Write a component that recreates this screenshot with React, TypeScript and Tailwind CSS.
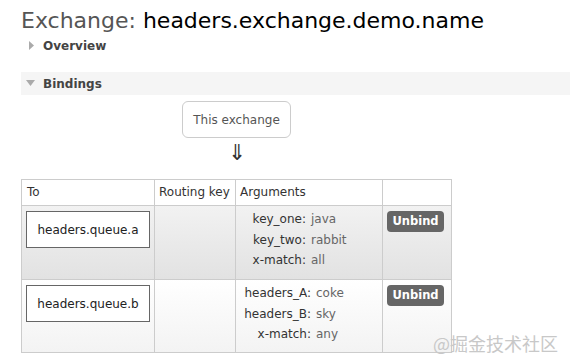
import React from "react";

const font = { fontFamily: '"DejaVu Sans", Verdana, sans-serif' };

function Args({ rows, keyW }: { rows: [string, string][]; keyW: string }) {
  return (
    <div className="flex flex-col pt-[3px] text-[12px] leading-[20.5px]">
      {rows.map(([k, v]) => (
        <div key={k} className="flex">
          <span className={`${keyW} text-right text-[#333]`}>{k}:</span>
          <span className="pl-[5px] text-[#666]">{v}</span>
        </div>
      ))}
    </div>
  );
}

function Row({
  queue,
  rows,
  keyW,
  bg,
  last,
}: {
  queue: string;
  rows: [string, string][];
  keyW: string;
  bg: string;
  last?: boolean;
}) {
  return (
    <div className={`flex h-[74px] ${bg} ${last ? "border-b border-[#ccc]" : ""}`}>
      <div className="w-[133px] border-l border-t border-[#ccc] pl-[4px] pt-[5px]">
        <div className="flex h-[37px] w-[124px] items-center justify-center border border-[#666] bg-white text-[12px] text-[#222]">
          {queue}
        </div>
      </div>
      <div className="w-[81px] border-l border-t border-[#ccc]" />
      <div className="w-[147px] border-l border-t border-[#ccc]">
        <Args rows={rows} keyW={keyW} />
      </div>
      <div className="w-[70px] border-l border-r border-t border-[#ccc] pl-[4px] pt-[5px]">
        <div className="flex h-[21px] w-[57px] items-center justify-center rounded-[4px] bg-[#666] text-[11.5px] font-bold text-white">
          Unbind
        </div>
      </div>
    </div>
  );
}

export default function App() {
  return (
    <div className="relative h-[364px] w-[570px] overflow-hidden bg-white" style={font}>
      <div className="pl-[21px] pt-[8px] text-[22px] leading-[26px]">
        <span className="text-[#555]">Exchange: </span>
        <span className="text-black">headers.exchange.demo.name</span>
      </div>
      <div className="flex h-[24px] items-center pl-[29px]">
        <svg width="6" height="10" viewBox="0 0 6 10" className="mr-[8px]">
          <polygon points="0,0 5,4.5 0,9" fill="#aaa" />
        </svg>
        <span className="text-[12px] font-bold text-[#444]">Overview</span>
      </div>
      <div className="ml-[21px] mt-[14px] flex h-[23px] items-center bg-[#f5f5f5] pl-[5px]">
        <svg width="9" height="7" viewBox="0 0 9 7" className="mr-[8px]">
          <polygon points="0,0 9,0 4.5,6" fill="#aaa" />
        </svg>
        <span className="text-[12px] font-bold text-[#444]">Bindings</span>
      </div>
      <div className="ml-[182px] mt-[6px] flex h-[37px] w-[109px] items-center justify-center rounded-[6px] border border-[#ccc] text-[12px] text-[#555]">
        This exchange
      </div>
      <div className="ml-[228px] mt-[2px] h-[26px] text-[22px] leading-[26px] text-[#333]">⇓</div>
      <div className="ml-[21px] mt-[13px] w-[431px] text-[12px] text-[#333]">
        <div className="flex h-[26px] bg-white">
          <div className="w-[133px] border-l border-t border-[#ccc] pl-[5px] leading-[24px]">To</div>
          <div className="w-[81px] border-l border-t border-[#ccc] pl-[4px] leading-[24px]">Routing key</div>
          <div className="w-[147px] border-l border-t border-[#ccc] pl-[4px] leading-[24px]">Arguments</div>
          <div className="w-[70px] border-l border-r border-t border-[#ccc]" />
        </div>
        <Row
          queue="headers.queue.a"
          rows={[
            ["key_one", "java"],
            ["key_two", "rabbit"],
            ["x-match", "all"],
          ]}
          keyW="w-[70px]"
          bg="bg-gradient-to-b from-[#f2f2f2] to-[#e2e2e2]"
        />
        <Row
          queue="headers.queue.b"
          rows={[
            ["headers_A", "coke"],
            ["headers_B", "sky"],
            ["x-match", "any"],
          ]}
          keyW="w-[75px]"
          bg="bg-gradient-to-b from-[#ffffff] to-[#f3f3f3]"
          last
        />
      </div>
      <div
        className="absolute left-[433px] top-[332px] text-[18px] leading-[22px] text-[#c8c8c8]"
        style={{ fontFamily: '"Noto Sans CJK SC", "DejaVu Sans", sans-serif' }}
      >
        @掘金技术社区
      </div>
    </div>
  );
}
